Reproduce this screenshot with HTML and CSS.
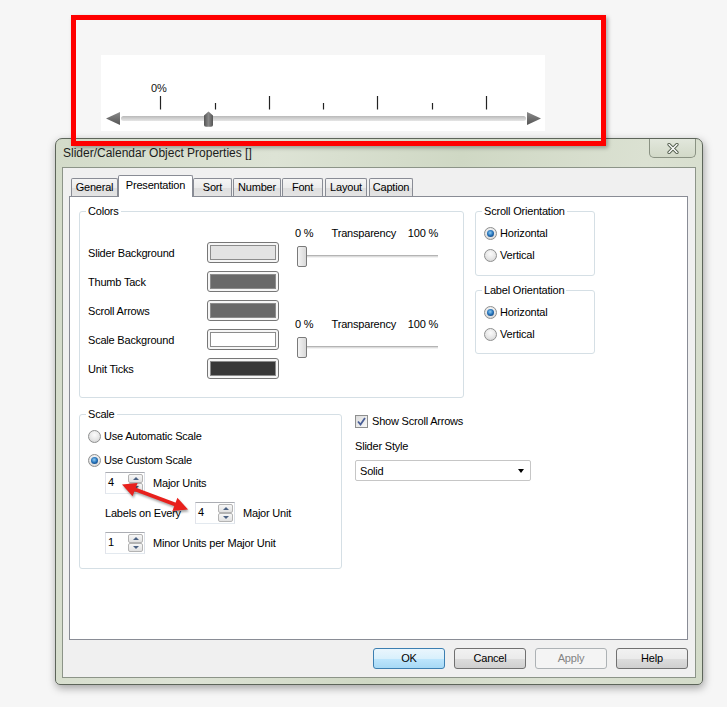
FILE: index.html
```html
<!DOCTYPE html>
<html>
<head>
<meta charset="utf-8">
<title>Slider/Calendar Object Properties</title>
<link rel="stylesheet" href="styles.css">
</head>
<body>
<div class="page">
  <div class="preview">
    <svg width="444" height="76" viewBox="0 0 444 76">
      <defs>
        <linearGradient id="trk" x1="0" y1="0" x2="0" y2="1">
          <stop offset="0" stop-color="#b9b9b9"/>
          <stop offset="0.5" stop-color="#d0d0d0"/>
          <stop offset="1" stop-color="#e6e6e6"/>
        </linearGradient>
        <linearGradient id="thm" x1="0" y1="0" x2="1" y2="0">
          <stop offset="0" stop-color="#555"/>
          <stop offset="0.5" stop-color="#888"/>
          <stop offset="1" stop-color="#555"/>
        </linearGradient>
        <linearGradient id="arw" x1="0" y1="0" x2="0" y2="1">
          <stop offset="0" stop-color="#8a8a8a"/>
          <stop offset="1" stop-color="#555"/>
        </linearGradient>
      </defs>
      <text class="pv-label" x="50" y="36.5">0%</text>
      <g stroke="#222" stroke-width="1.2">
        <line x1="59.5" y1="41" x2="59.5" y2="54.5"/>
        <line x1="168.5" y1="41" x2="168.5" y2="54.5"/>
        <line x1="276.5" y1="41" x2="276.5" y2="54.5"/>
        <line x1="385.5" y1="41" x2="385.5" y2="54.5"/>
        <line x1="114.5" y1="48" x2="114.5" y2="54.5"/>
        <line x1="222.5" y1="48" x2="222.5" y2="54.5"/>
        <line x1="331.5" y1="48" x2="331.5" y2="54.5"/>
      </g>
      <rect x="20" y="61" width="405" height="5" rx="2.5" fill="url(#trk)"/>
      <polygon points="5,63.5 19,57 19,70" fill="url(#arw)"/>
      <polygon points="440,63.5 426,57 426,70" fill="url(#arw)"/>
      <path d="M103 60.5 L107.5 56.5 L112 60.5 V70 Q112 71.7 110 71.7 H105 Q103 71.7 103 70 Z" fill="url(#thm)"/>
    </svg>
  </div>

  <div class="dialog">
    <div class="titlebar">
      <span class="title">Slider/Calendar Object Properties []</span>
      <div class="close-btn">
        <svg width="12" height="11" viewBox="0 0 12 11">
          <path d="M2 1.5 L10 9.5 M10 1.5 L2 9.5" stroke="#55604f" stroke-width="3.2" stroke-linecap="round"/>
          <path d="M2 1.5 L10 9.5 M10 1.5 L2 9.5" stroke="#ffffff" stroke-width="1.4" stroke-linecap="round"/>
        </svg>
      </div>
    </div>

    <div class="client">
      <div class="tabs">
        <div class="tab t-general">General</div>
        <div class="tab tab-active t-pres">Presentation</div>
        <div class="tab t-sort">Sort</div>
        <div class="tab t-number">Number</div>
        <div class="tab t-font">Font</div>
        <div class="tab t-layout">Layout</div>
        <div class="tab t-caption">Caption</div>
      </div>

      <div class="panel">
        <div class="row1">
          <div class="group g-colors">
            <div class="legend">Colors</div>
            <div class="colors-body">
              <div class="color-list">
                <div class="color-row"><span class="color-label">Slider Background</span><span class="swatch"><span class="fill f-light"></span></span></div>
                <div class="color-row"><span class="color-label">Thumb Tack</span><span class="swatch"><span class="fill f-mid"></span></span></div>
                <div class="color-row"><span class="color-label">Scroll Arrows</span><span class="swatch"><span class="fill f-mid"></span></span></div>
                <div class="color-row"><span class="color-label">Scale Background</span><span class="swatch"><span class="fill f-white"></span></span></div>
                <div class="color-row"><span class="color-label">Unit Ticks</span><span class="swatch"><span class="fill f-dark"></span></span></div>
              </div>
              <div class="transp-col">
                <div class="transp">
                  <div class="transp-head"><span class="th-min">0 %</span><span class="th-title">Transparency</span><span>100 %</span></div>
                  <div class="trackbar"><span class="tb-thumb"></span><span class="tb-line"></span></div>
                </div>
                <div class="transp transp-2">
                  <div class="transp-head"><span class="th-min">0 %</span><span class="th-title">Transparency</span><span>100 %</span></div>
                  <div class="trackbar"><span class="tb-thumb"></span><span class="tb-line"></span></div>
                </div>
              </div>
            </div>
          </div>

          <div class="side-col">
            <div class="group g-orient">
              <div class="legend">Scroll Orientation</div>
              <div class="radio-list">
                <div class="radio on"><span class="rb"></span>Horizontal</div>
                <div class="radio"><span class="rb"></span>Vertical</div>
              </div>
            </div>
            <div class="group g-orient g-label">
              <div class="legend">Label Orientation</div>
              <div class="radio-list">
                <div class="radio on"><span class="rb"></span>Horizontal</div>
                <div class="radio"><span class="rb"></span>Vertical</div>
              </div>
            </div>
          </div>
        </div>

        <div class="row2">
          <div class="group g-scale">
            <div class="legend">Scale</div>
            <div class="scale-body">
              <div class="radio-list radio-list-scale">
                <div class="radio"><span class="rb"></span>Use Automatic Scale</div>
                <div class="radio on"><span class="rb"></span>Use Custom Scale</div>
              </div>
              <div class="spin-rows">
                <div class="spin-row">
                  <div class="spin"><span class="spin-val">4</span><span class="spin-btns"><span class="spin-btn up"></span><span class="spin-btn down"></span></span></div>
                  <span class="spin-text">Major Units</span>
                </div>
                <div class="spin-row">
                  <span class="every">Labels on Every</span>
                  <div class="spin"><span class="spin-val">4</span><span class="spin-btns"><span class="spin-btn up"></span><span class="spin-btn down"></span></span></div>
                  <span class="spin-text">Major Unit</span>
                </div>
                <div class="spin-row">
                  <div class="spin"><span class="spin-val">1</span><span class="spin-btns"><span class="spin-btn up"></span><span class="spin-btn down"></span></span></div>
                  <span class="spin-text">Minor Units per Major Unit</span>
                </div>
              </div>
            </div>
          </div>

          <div class="style-col">
            <div class="check">
              <span class="cb">
                <svg width="11" height="11" viewBox="0 0 11 11"><path d="M2 5.5 L4.5 8.5 L9 2" fill="none" stroke="#4a5f97" stroke-width="1.8"/></svg>
              </span>
              Show Scroll Arrows
            </div>
            <div class="style-label">Slider Style</div>
            <div class="combo"><span>Solid</span><span class="combo-arrow"></span></div>
          </div>
        </div>
      </div>

      <div class="buttons">
        <div class="btn btn-default">OK</div>
        <div class="btn">Cancel</div>
        <div class="btn btn-disabled">Apply</div>
        <div class="btn">Help</div>
      </div>
    </div>
  </div>

  <div class="annot-rect"></div>
  <svg class="annot-arrow" width="90" height="50" viewBox="0 0 90 50">
    <line x1="24" y1="17" x2="66" y2="32.8" stroke="#e8201c" stroke-width="3.6"/>
    <polygon points="12,12.6 22.6,24.2 27.6,10.9" fill="#e8201c"/>
    <polygon points="78,37.4 62.4,39.1 67.4,25.8" fill="#e8201c"/>
  </svg>
</div>
</body>
</html>
```

FILE: styles.css
```css
* { box-sizing: border-box; }
html, body { margin: 0; padding: 0; }
body {
  width: 727px;
  height: 707px;
  overflow: hidden;
  background: #f6f6f6;
  font-family: "Liberation Sans", Arial, sans-serif;
  font-size: 11px;
  letter-spacing: -0.2px;
  color: #000;
}
.page {
  position: relative;
  width: 727px;
  height: 707px;
  padding-top: 55px;
}

/* preview slider */
.preview {
  margin-left: 101px;
  width: 444px;
  height: 76px;
  background: #fff;
}
.preview svg { display: block; }
.pv-label { font-family: "Liberation Sans", Arial, sans-serif; font-size: 11px; fill: #111; }

/* dialog */
.dialog {
  margin: 7px 0 0 55px;
  width: 648px;
  height: 547px;
  border: 1px solid #5d655a;
  border-radius: 7px 7px 5px 5px;
  background: linear-gradient(100deg, #d3dbc9 0%, #dde3d5 30%, #cfd8c4 55%, #dbe1d2 80%, #d3dbc9 100%);
  padding: 0 6px 6px;
  box-shadow: 1px 3px 8px rgba(0, 0, 0, 0.35);
  display: flex;
  flex-direction: column;
}
.titlebar {
  height: 28px;
  flex: none;
  display: flex;
  align-items: center;
  padding-left: 1px;
}
.title {
  font-size: 12px;
  letter-spacing: 0;
  color: #1c1c1c;
}
.close-btn {
  margin-left: auto;
  align-self: flex-start;
  width: 47px;
  height: 19px;
  border: 1px solid #8a9283;
  border-top: none;
  border-radius: 0 0 5px 5px;
  background: linear-gradient(#e2e7dc, #d2d9c8);
  display: flex;
  align-items: center;
  justify-content: center;
}
.close-btn svg { display: block; }

.client {
  flex: 1;
  border: 1px solid #8c9488;
  background: #f0f0f0;
  padding: 7px 7px 8px 6px;
  display: flex;
  flex-direction: column;
}

/* tabs */
.tabs {
  margin-left: 2px;
  height: 21px;
  flex: none;
  display: flex;
  align-items: flex-end;
}
.tab {
  height: 18px;
  border: 1px solid #898c95;
  border-bottom: none;
  border-radius: 2px 2px 0 0;
  background: linear-gradient(#f5f5f5 0%, #ececec 50%, #dedede 51%, #e4e4e4 100%);
  text-align: center;
  line-height: 16px;
  white-space: nowrap;
}
.tab-active {
  height: 22px;
  margin-bottom: -1px;
  background: #fff;
  position: relative;
  z-index: 1;
  padding-top: 1px;
}
.t-general { width: 47px; }
.t-pres { width: 75px; }
.t-sort { width: 39px; margin-right: 1px; }
.t-number { width: 48px; margin-right: 1px; }
.t-font { width: 41px; margin-right: 2px; }
.t-layout { width: 42px; margin-right: 2px; }
.t-caption { width: 44px; }

.panel {
  flex: none;
  height: 444px;
  border: 1px solid #898c95;
  background: #fff;
  padding: 14px 9px;
}

/* group boxes */
.group {
  border: 1px solid #d5dfe5;
  border-radius: 3px;
}
.legend {
  display: table;
  margin: -7px 0 0 6px;
  padding: 0 2px;
  background: #fff;
  line-height: 13px;
  height: 13px;
}

.row1 { display: flex; align-items: flex-start; }
.g-colors { width: 385px; height: 187px; }
.colors-body { display: flex; padding-left: 8px; }
.color-list {
  padding-top: 24px;
  display: flex;
  flex-direction: column;
  gap: 8px;
}
.color-row { display: flex; align-items: center; height: 21px; }
.color-label { width: 119px; }
.swatch {
  width: 72px;
  height: 21px;
  border: 1px solid #777;
  border-radius: 3px;
  padding: 2px;
  background: #f6f6f6;
}
.fill { display: block; height: 100%; border: 1px solid #8c8c8c; }
.f-light { background: #e3e3e3; }
.f-mid { background: #696969; }
.f-white { background: #fff; }
.f-dark { background: #383838; }

.transp-col { width: 143px; margin-left: 16px; padding-top: 8px; }
.transp-2 { margin-top: 50px; }
.transp-head { display: flex; height: 14px; line-height: 14px; white-space: nowrap; }
.th-min { width: 37px; }
.th-title { width: 77px; }
.trackbar {
  margin-top: 6px;
  height: 21px;
  display: flex;
  align-items: center;
  padding-left: 2px;
}
.tb-thumb {
  position: relative;
  z-index: 1;
  width: 10px;
  height: 21px;
  flex: none;
  border: 1px solid #7a7a7a;
  border-radius: 2px;
  background: linear-gradient(90deg, #f4f4f4, #e6e6e6 50%, #d9d9d9);
}
.tb-line {
  flex: 1;
  margin-left: -5px;
  height: 3px;
  border-top: 1px solid #b4b4b4;
  border-bottom: 1px solid #f2f2f2;
  background: #dcdcdc;
}

.side-col { margin-left: 11px; }
.g-orient { width: 120px; height: 65px; }
.g-label { margin-top: 14px; height: 64px; }
.radio-list {
  padding: 7px 0 0 8px;
  display: flex;
  flex-direction: column;
  gap: 6px;
}
.radio { display: flex; align-items: center; height: 16px; white-space: nowrap; }
.rb {
  position: relative;
  flex: none;
  width: 13px;
  height: 13px;
  margin-right: 3px;
  border-radius: 50%;
  border: 1px solid #8e8f8f;
  background: radial-gradient(circle at 50% 35%, #fbfbfb 0%, #e6e6e6 55%, #cdcdcd 100%);
}
.radio.on .rb::after {
  content: "";
  position: absolute;
  left: 2px;
  top: 2px;
  width: 7px;
  height: 7px;
  border-radius: 50%;
  background: radial-gradient(circle at 45% 40%, #8fcdf4 0%, #2370b8 50%, #0a2d5c 100%);
}

/* row 2 */
.row2 { display: flex; align-items: flex-start; margin-top: 16px; }
.g-scale { width: 263px; height: 155px; }
.radio-list-scale { gap: 8px; }
.spin-rows {
  margin-top: 4px;
  padding-left: 25px;
  display: flex;
  flex-direction: column;
  gap: 8px;
}
.spin-row { display: flex; align-items: center; height: 22px; }
.every { width: 90px; }
.spin {
  display: flex;
  width: 40px;
  height: 22px;
  border: 1px solid;
  border-color: #abadb3 #dbdfe6 #e3e9ef #e2e3ea;
  background: #fff;
  margin-right: 8px;
}
.spin-val { flex: 1; padding-left: 2px; line-height: 18px; }
.spin-btns {
  width: 16px;
  display: flex;
  flex-direction: column;
  padding: 1px 1px 1px 0;
}
.spin-btn {
  flex: 1;
  border: 1px solid #b3b3b3;
  border-radius: 2px;
  background: linear-gradient(#f7f7f7, #e1e1e1);
  display: flex;
  align-items: center;
  justify-content: center;
}
.spin-btn.up::after {
  content: "";
  border-left: 3px solid transparent;
  border-right: 3px solid transparent;
  border-bottom: 3px solid #4c6283;
}
.spin-btn.down::after {
  content: "";
  border-left: 3px solid transparent;
  border-right: 3px solid transparent;
  border-top: 3px solid #4c6283;
}

.style-col { margin-left: 13px; }
.check { display: flex; align-items: center; height: 14px; white-space: nowrap; }
.cb {
  width: 13px;
  height: 13px;
  margin-right: 4px;
  border: 1px solid #8e8f8f;
  background: linear-gradient(135deg, #dcdcdc, #f8f8f8);
  display: flex;
  align-items: center;
  justify-content: center;
}
.cb svg { display: block; }
.style-label { margin-top: 11px; height: 14px; line-height: 14px; }
.combo {
  margin-top: 7px;
  width: 176px;
  height: 21px;
  border: 1px solid #c6c6c6;
  border-radius: 2px;
  background: #fff;
  display: flex;
  align-items: center;
  justify-content: space-between;
  padding: 0 6px 0 4px;
}
.combo-arrow {
  border-left: 3.5px solid transparent;
  border-right: 3.5px solid transparent;
  border-top: 4px solid #000;
}

/* buttons */
.buttons {
  margin-top: 8px;
  height: 21px;
  flex: none;
  display: flex;
  justify-content: flex-end;
  gap: 9px;
}
.btn {
  width: 72px;
  height: 21px;
  border: 1px solid #707070;
  border-radius: 3px;
  background: linear-gradient(#f2f2f2 0%, #ebebeb 50%, #dddddd 51%, #cfcfcf 100%);
  text-align: center;
  line-height: 19px;
}
.btn-default {
  border-color: #3c7fb1;
  background: linear-gradient(#eaf6fd 0%, #d9f0fc 50%, #bee6fd 51%, #a7d9f5 100%);
}
.btn-disabled {
  border-color: #adb2b5;
  background: #f4f4f4;
  color: #838383;
}

/* annotations */
.annot-rect {
  position: absolute;
  left: 71px;
  top: 15px;
  width: 535px;
  height: 131px;
  border: 5px solid #ff0000;
  box-shadow: 2px 2px 4px rgba(0, 0, 0, 0.3);
  z-index: 5;
}
.annot-arrow {
  position: absolute;
  left: 110px;
  top: 472px;
  z-index: 5;
  filter: drop-shadow(1px 2px 1px rgba(0, 0, 0, 0.35));
}
```
